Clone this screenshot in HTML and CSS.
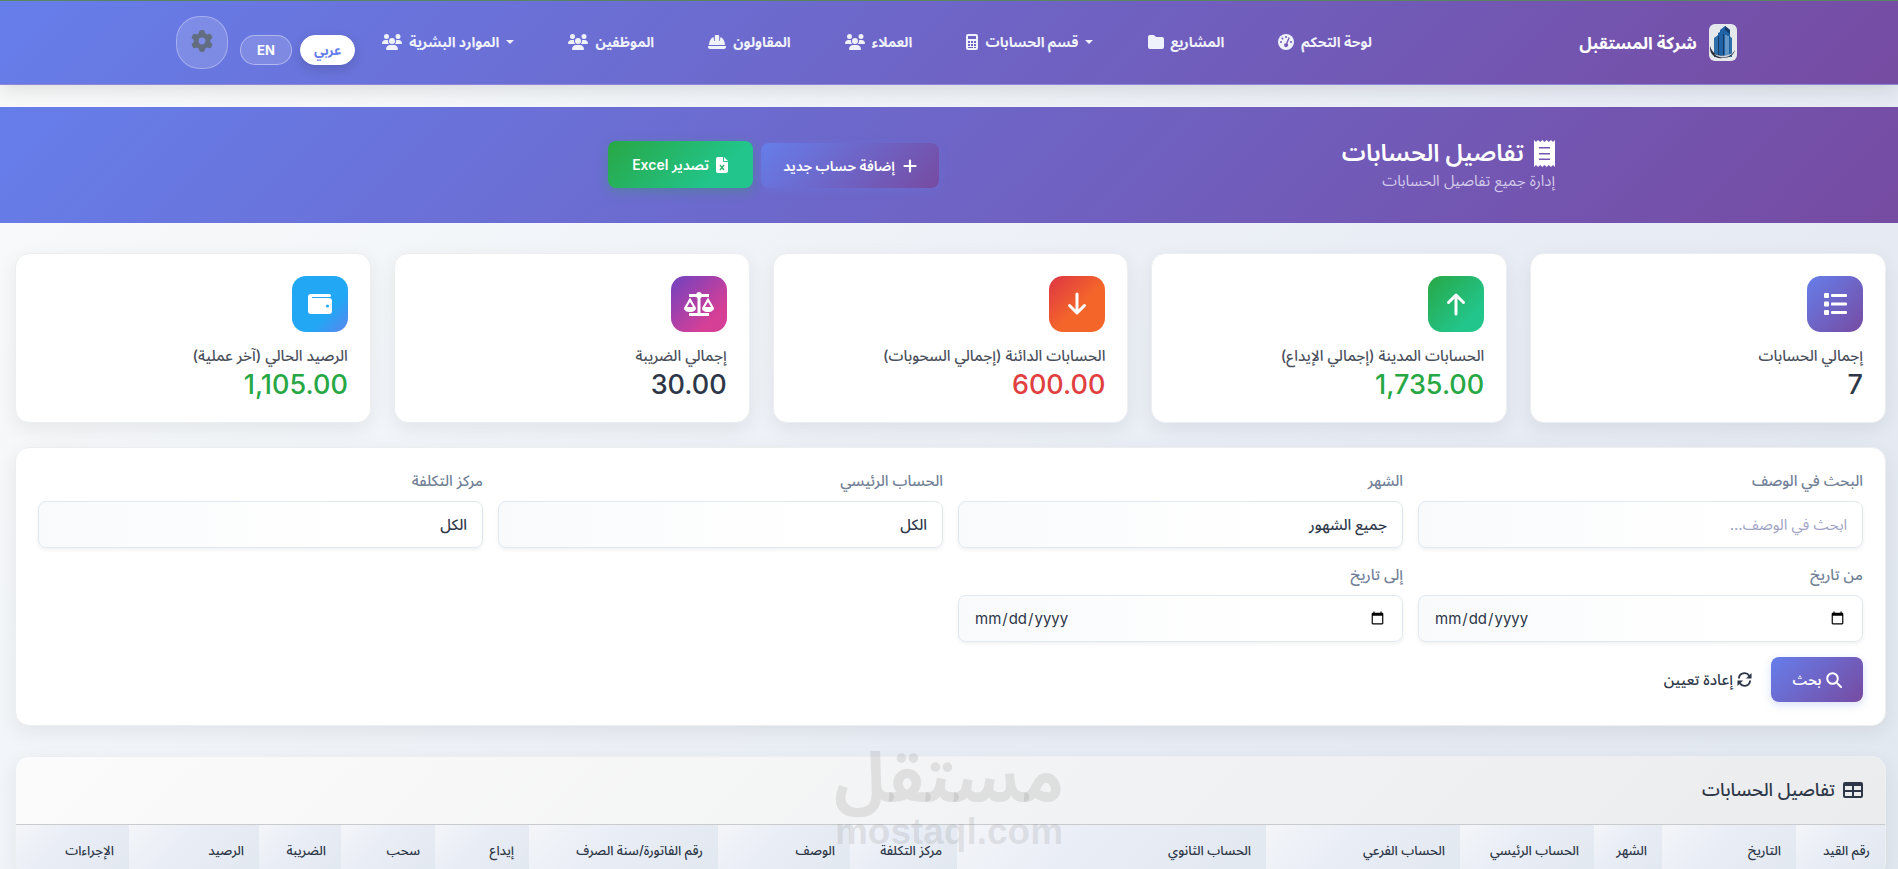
FILE: index.html
```html
<!DOCTYPE html>
<html lang="ar" dir="rtl">
<head>
<meta charset="utf-8">
<title>تفاصيل الحسابات</title>
<link rel="stylesheet" href="styles.css">
</head>
<body>
<svg class="sprite" aria-hidden="true">
  <symbol id="users" viewBox="0 0 640 512"><path d="M144 0a80 80 0 1 1 0 160A80 80 0 1 1 144 0zM512 0a80 80 0 1 1 0 160A80 80 0 1 1 512 0zM0 298.7C0 239.8 47.8 192 106.7 192h42.7c15.9 0 31 3.5 44.6 9.7c-1.3 7.2-1.9 14.7-1.9 22.3c0 38.2 16.8 72.5 43.3 96H21.3C9.6 320 0 310.4 0 298.7zM405.3 320c26.6-23.5 43.3-57.8 43.3-96c0-7.6-.7-15-1.9-22.3c13.6-6.3 28.7-9.7 44.6-9.7h42.7C592.2 192 640 239.8 640 298.7c0 11.8-9.6 21.3-21.3 21.3H405.3zM224 224a96 96 0 1 1 192 0 96 96 0 1 1-192 0zM128 485.3C128 411.7 187.7 352 261.3 352H378.7C452.3 352 512 411.7 512 485.3c0 14.7-11.9 26.7-26.7 26.7H154.7c-14.7 0-26.7-11.9-26.7-26.7z"/></symbol>
  <symbol id="gear" viewBox="0 0 512 512"><path d="M495.9 166.6c3.2 8.7 .5 18.4-6.4 24.6l-43.3 39.4c1.1 8.3 1.7 16.8 1.7 25.4s-.6 17.1-1.7 25.4l43.3 39.4c6.9 6.2 9.6 15.9 6.4 24.6c-4.4 11.9-9.7 23.3-15.8 34.3l-4.7 8.1c-6.6 11-14 21.4-22.1 31.2c-5.9 7.2-15.7 9.6-24.5 6.8l-55.7-17.7c-13.4 10.3-28.2 18.9-44 25.4l-12.5 57.1c-2 9.1-9 16.3-18.2 17.8c-13.8 2.3-28 3.5-42.5 3.5s-28.7-1.2-42.5-3.5c-9.2-1.5-16.2-8.7-18.2-17.8l-12.5-57.1c-15.8-6.5-30.6-15.1-44-25.4L83.1 425.9c-8.8 2.8-18.6 .3-24.5-6.8c-8.1-9.8-15.5-20.2-22.1-31.2l-4.7-8.1c-6.1-11-11.4-22.4-15.8-34.3c-3.2-8.7-.5-18.4 6.4-24.6l43.3-39.4C64.6 273.1 64 264.6 64 256s.6-17.1 1.7-25.4L22.4 191.2c-6.9-6.2-9.6-15.9-6.4-24.6c4.4-11.9 9.7-23.3 15.8-34.3l4.7-8.1c6.6-11 14-21.4 22.1-31.2c5.9-7.2 15.7-9.6 24.5-6.8l55.7 17.7c13.4-10.3 28.2-18.9 44-25.4l12.5-57.1c2-9.1 9-16.3 18.2-17.8C227.3 1.2 241.5 0 256 0s28.7 1.2 42.5 3.5c9.2 1.5 16.2 8.7 18.2 17.8l12.5 57.1c15.8 6.5 30.6 15.1 44 25.4l55.7-17.7c8.8-2.8 18.6-.3 24.5 6.8c8.1 9.8 15.5 20.2 22.1 31.2l4.7 8.1c6.1 11 11.4 22.4 15.8 34.3zM256 336a80 80 0 1 0 0-160 80 80 0 1 0 0 160z"/></symbol>
</svg>

<header class="topbar">
  <a class="brand" href="#">
    <svg class="brand-logo" viewBox="0 0 28 37" aria-hidden="true">
      <rect width="28" height="37" rx="6" fill="#e6e9ec"/>
      <path d="M5 14l4-3v22H5zM19 11l4 3v19h-4z" fill="#2f6fa8"/>
      <path d="M9 33V9l2-1V6l5-4 5 4v27z" fill="#1f62a5"/>
      <path d="M16 2l5 4v4l-5-4zM9 12h1v20H9zM14 10h1v22h-1z" fill="#173b66"/>
      <path d="M17 11v21M19 12v20" stroke="#a9cbe8" stroke-width="1"/>
      <path d="M1 22c-1 8 5 13 13 12 6 0 11-3 12-8-3 5-7 6-11 6-7 0-12-3-14-10z" fill="#272c3c"/>
      <path d="M5 30c5 5 14 5 20-2-5 4-13 5-20 2z" fill="#cfd4dc"/>
    </svg>
    <span>شركة المستقبل</span>
  </a>
  <nav class="nav" aria-label="القائمة الرئيسية">
    <a href="#">لوحة التحكم
      <svg class="nav-icon" viewBox="0 0 16 16"><circle cx="8" cy="8" r="8"/><g fill="#7257b5"><circle cx="8" cy="3" r="1"/><circle cx="4.400" cy="4.500" r="1"/><circle cx="3" cy="8" r="1"/><circle cx="13" cy="8" r="1"/><path d="M10.500 3.200l1.300.6-2.400 6a1.900 1.900 0 1 1-1.300-.5z"/></g></svg></a>
    <a href="#">المشاريع
      <svg class="nav-icon" viewBox="0 0 16 16"><path d="M2 1h4l2 2h6a2 2 0 0 1 2 2v8a2 2 0 0 1-2 2H2a2 2 0 0 1-2-2V3a2 2 0 0 1 2-2z"/></svg></a>
    <a href="#"><i class="caret"></i>قسم الحسابات
      <svg class="nav-icon nav-icon-slim" viewBox="0 0 12 16"><path fill-rule="evenodd" d="M2 0h8a2 2 0 0 1 2 2v12a2 2 0 0 1-2 2H2a2 2 0 0 1-2-2V2a2 2 0 0 1 2-2zM2 2v3h8V2zM2 7v2h2V7zM5 7v2h2V7zM8 7v2h2V7zM2 10v2h2v-2zM5 10v2h2v-2zM8 10v2h2v-2zM2 13v1h5v-1zM8 13v1h2v-1z"/></svg></a>
    <a href="#">العملاء
      <svg class="nav-icon nav-icon-wide"><use href="#users"/></svg></a>
    <a href="#">المقاولون
      <svg class="nav-icon nav-icon-hat" viewBox="0 0 18 16"><path d="M1 11c0-4 2-7 4.500-8l.7 4h.6V2c0-.6.400-1 1-1h2.400c.6 0 1 .4 1 1v5h.6l.7-4C15 4 17 7 17 11zM0 12h18v1c0 1-1 2-2 2H2c-1 0-2-1-2-2z"/></svg></a>
    <a href="#">الموظفين
      <svg class="nav-icon nav-icon-wide"><use href="#users"/></svg></a>
    <a href="#"><i class="caret"></i>الموارد البشرية
      <svg class="nav-icon nav-icon-wide"><use href="#users"/></svg></a>
  </nav>
  <div class="langs">
    <a class="lang lang-active" href="#">عربي</a>
    <a class="lang" href="#">EN</a>
  </div>
  <button class="settings" type="button" aria-label="الإعدادات"><svg><use href="#gear"/></svg></button>
</header>

<section class="hero">
  <div class="hero-inner">
    <div class="hero-text">
      <h1>
        <svg viewBox="0 0 21 27" aria-hidden="true"><path fill-rule="evenodd" d="M0 0l2 2 2-2 2.200 2L8.300 0l2.200 2 2.200-2 2.100 2L17 0l2 2 2-2v27l-2-2-2 2-2.200-2-2.100 2-2.200-2-2.200 2-2.100-2L4 27l-2-2-2 2zM5 7v1.500h11V7zM5 13v1.500h11V13zM5 18.500V20h11v-1.500z"/></svg>
        تفاصيل الحسابات
      </h1>
      <p>إدارة جميع تفاصيل الحسابات</p>
    </div>
    <div class="hero-actions">
      <a class="btn btn-primary" href="#">
        <svg viewBox="0 0 14 14" aria-hidden="true"><path d="M7 1.500v11M1.500 7h11" stroke="#fff" stroke-width="2.200" stroke-linecap="round"/></svg>
        إضافة حساب جديد</a>
      <button class="btn btn-excel" type="button">
        <svg viewBox="0 0 12 16" aria-hidden="true"><path d="M2 0h5v4a1 1 0 0 0 1 1h4v9a2 2 0 0 1-2 2H2a2 2 0 0 1-2-2V2a2 2 0 0 1 2-2zM8 0l4 4H8z"/><path d="M4 8l4 5M8 8l-4 5" stroke="#27b36a" stroke-width="1.300"/></svg>
        <span>تصدير <span dir="ltr">Excel</span></span></button>
    </div>
  </div>
</section>

<main class="content">
  <section class="stats">
    <article class="card stat">
      <div class="stat-icon icon-list"><svg viewBox="0 0 24 24"><g><rect x="1" y="1" width="5" height="5" rx="1"/><rect x="1" y="9.500" width="5" height="5" rx="1"/><rect x="1" y="18" width="5" height="5" rx="1"/><rect x="8" y="2" width="16" height="3" rx="1"/><rect x="8" y="10.500" width="16" height="3" rx="1"/><rect x="8" y="19" width="16" height="3" rx="1"/></g></svg></div>
      <div class="stat-label">إجمالي الحسابات</div>
      <div class="stat-value">7</div>
    </article>
    <article class="card stat">
      <div class="stat-icon icon-up"><svg viewBox="0 0 24 24"><path class="line" d="M12 22V3M4.500 10.500L12 3l7.500 7.500"/></svg></div>
      <div class="stat-label">الحسابات المدينة (إجمالي الإيداع)</div>
      <div class="stat-value green">1,735.00</div>
    </article>
    <article class="card stat">
      <div class="stat-icon icon-down"><svg viewBox="0 0 24 24"><path class="line" d="M12 2v19M4.500 13.500L12 21l7.500-7.500"/></svg></div>
      <div class="stat-label">الحسابات الدائنة (إجمالي السحوبات)</div>
      <div class="stat-value red">600.00</div>
    </article>
    <article class="card stat">
      <div class="stat-icon icon-tax"><svg class="wide" viewBox="0 0 30 24"><path fill-rule="evenodd" d="M5 2h7.200a3 3 0 0 1 5.600 0H25v3h-7.200l-1.300 1.200V21H25v3H5v-3h8.500V6.200L12.200 5H5zM6 5.500l6 10.500c0 2.500-2.700 4-6 4s-6-1.500-6-4zM6 10l-3 5h6zM24 5.500L30 16c0 2.500-2.700 4-6 4s-6-1.500-6-4zM24 10l-3 5h6z"/></svg></div>
      <div class="stat-label">إجمالي الضريبة</div>
      <div class="stat-value">30.00</div>
    </article>
    <article class="card stat">
      <div class="stat-icon icon-wallet"><svg viewBox="0 0 24 24"><path fill-rule="evenodd" d="M3 2h18.500a1.500 1.500 0 0 1 0 3H4v1h17a3 3 0 0 1 3 3v10a3 3 0 0 1-3 3H3a3 3 0 0 1-3-3V5a3 3 0 0 1 3-3zM19.500 12.500a1.500 1.500 0 1 0 0 3 1.500 1.500 0 0 0 0-3z"/></svg></div>
      <div class="stat-label">الرصيد الحالي (آخر عملية)</div>
      <div class="stat-value green">1,105.00</div>
    </article>
  </section>

  <form class="card filters">
    <div class="field"><label for="q">البحث في الوصف</label><input id="q" type="text" placeholder="ابحث في الوصف..."></div>
    <div class="field"><label for="month">الشهر</label><select id="month"><option>جميع الشهور</option></select></div>
    <div class="field"><label for="account">الحساب الرئيسي</label><select id="account"><option>الكل</option></select></div>
    <div class="field"><label for="center">مركز التكلفة</label><select id="center"><option>الكل</option></select></div>
    <div class="field"><label for="from">من تاريخ</label><input id="from" type="date" dir="ltr" lang="en"></div>
    <div class="field"><label for="to">إلى تاريخ</label><input id="to" type="date" dir="ltr" lang="en"></div>
    <div class="filter-actions">
      <button class="btn btn-search" type="submit"><svg viewBox="0 0 16 16" aria-hidden="true"><path d="M11 11l4 4" stroke="#fff" stroke-width="2" stroke-linecap="round"/><circle cx="6.500" cy="6.500" r="5.300" fill="none" stroke="#fff" stroke-width="2"/></svg>بحث</button>
      <button class="reset" type="reset"><svg viewBox="0 0 16 16" aria-hidden="true"><path d="M2 7a6 6 0 0 1 11-3l1.500 2M14 9a6 6 0 0 1-11 3L1.500 10" fill="none" stroke="#2d3748" stroke-width="2"/><path d="M15.500 1v6h-6zM.5 15V9h6z"/></svg>إعادة تعيين</button>
    </div>
  </form>

  <section class="card table-card">
    <h2><svg viewBox="0 0 20 18" aria-hidden="true"><path fill-rule="evenodd" d="M2 1h16a2 2 0 0 1 2 2v12a2 2 0 0 1-2 2H2a2 2 0 0 1-2-2V3a2 2 0 0 1 2-2zM2 5v4h7V5zM11 5v4h7V5zM2 11v4h7v-4zM11 11v4h7v-4z"/></svg>تفاصيل الحسابات</h2>
    <table>
      <colgroup><col class="c-no"><col class="c-date"><col class="c-month"><col class="c-main"><col class="c-sub"><col class="c-second"><col class="c-center"><col class="c-desc"><col class="c-invoice"><col class="c-in"><col class="c-out"><col class="c-tax"><col class="c-balance"><col></colgroup>
      <thead><tr><th>رقم القيد</th><th>التاريخ</th><th>الشهر</th><th>الحساب الرئيسي</th><th>الحساب الفرعي</th><th>الحساب الثانوي</th><th>مركز التكلفة</th><th>الوصف</th><th>رقم الفاتورة/سنة الصرف</th><th>إيداع</th><th>سحب</th><th>الضريبة</th><th>الرصيد</th><th>الإجراءات</th></tr></thead>
    </table>
  </section>
</main>

<div class="watermark" aria-hidden="true"><span class="wm-ar">مستقل</span><span class="wm-en" dir="ltr">mostaql.com</span></div>
</body>
</html>
```
FILE: styles.css
```css
* { box-sizing: border-box; }
html, body { height: 100%; }
body {
  margin: 0;
  overflow: hidden;
  position: relative;
  font-family: Inter, "Noto Sans Arabic", "Noto Sans", "DejaVu Sans", sans-serif;
  font-size: 15px;
  line-height: 24px;
  color: #2d3748;
  background: linear-gradient(135deg, #fafafa 0%, #f3f6f9 25%, #e9edf5 60%, #e2e8f0 100%);
}
a { text-decoration: none; color: inherit; }
button, input, select { font: inherit; color: inherit; }
svg { fill: currentColor; flex: none; }
.sprite { position: absolute; width: 0; height: 0; }

.topbar {
  display: flex;
  align-items: center;
  height: 85px;
  padding-inline: 161px 176px;
  color: #fff;
  background: linear-gradient(135deg, #667eea, #764ba2);
  border-top: 1px solid #588560;
  border-bottom: 1px solid #8f85d6;
  box-shadow: 0 4px 20px rgba(0, 0, 0, .12);
}
.brand { display: flex; align-items: center; gap: 12px; flex: 0 0 365px; font-size: 17px; font-weight: 700; white-space: nowrap; }
.brand-logo { width: 28px; height: 37px; }
.nav { flex: 1; display: flex; justify-content: space-between; padding-bottom: 2px; font-size: 14px; font-weight: 700; color: #f0f2fb; }
.nav a { display: flex; align-items: center; gap: 7px; white-space: nowrap; }
.nav-icon { width: 16px; height: 16px; }
.nav-icon-slim { width: 12px; }
.nav-icon-wide { width: 20px; }
.nav-icon-hat { width: 18px; }
.caret { border: 4px solid transparent; border-top-color: currentColor; border-bottom: 0; }
.langs { display: flex; gap: 8px; margin: 14px 27px 0 12px; }
.lang {
  padding: 2px 13px;
  min-width: 52px;
  text-align: center;
  border: 1px solid rgba(255, 255, 255, .4);
  border-radius: 15px;
  background: rgba(255, 255, 255, .15);
  font-size: 13px;
  font-weight: 700;
}
.lang-active { min-width: 55px; background: #fff; color: #667eea; border-color: #fff; box-shadow: 0 4px 12px rgba(0, 0, 0, .15); }
.settings {
  display: grid;
  place-items: center;
  width: 52px;
  height: 53px;
  padding: 0 0 4px;
  border: 1px solid rgba(255, 255, 255, .3);
  border-radius: 24px;
  background: rgba(255, 255, 255, .15);
  color: #626d80;
}
.settings svg { width: 22px; height: 22px; }

.hero { margin-top: 22px; padding: 28px 0 33px; background: linear-gradient(135deg, #667eea, #764ba2); color: #fff; }
.hero-inner { display: grid; grid-template-columns: 616px 1fr; align-items: center; max-width: 1212px; margin: 0 auto; }
h1 { display: flex; align-items: center; gap: 10px; margin: 0; font-size: 24px; line-height: 36px; font-weight: 600; }
h1 svg { width: 21px; height: 27px; }
.hero-text p { margin: 0; line-height: 19px; color: #d4caea; }
.hero-actions { display: flex; align-items: flex-end; gap: 8px; margin-top: 4px; }
.btn {
  display: inline-flex;
  align-items: center;
  justify-content: center;
  gap: 8px;
  height: 45px;
  padding: 0 20px;
  border: 0;
  border-radius: 8px;
  color: #fff;
  font-size: 14px;
  font-weight: 600;
  white-space: nowrap;
  background: linear-gradient(135deg, #667eea, #764ba2);
}
.btn svg { width: 14px; height: 16px; }
.btn-primary { min-width: 178px; box-shadow: 0 2px 10px rgba(102, 126, 234, .3); }
.btn-excel { height: 47px; min-width: 145px; gap: 6px; background: linear-gradient(135deg, #28a745, #22c58b 75%); box-shadow: 0 4px 12px rgba(40, 167, 69, .3); }

.content { padding: 30px 12px 0 15px; }
.card { background: #fff; border: 1px solid #eceef0; border-radius: 14px; box-shadow: 0 6px 20px rgba(0, 0, 0, .07); }
.stats { display: grid; grid-template-columns: repeat(5, 1fr); gap: 23px; }
.stat { padding: 22px 22px 20px; }
.stat-icon { display: grid; place-items: center; width: 56px; height: 56px; border-radius: 14px; color: #fff; }
.stat-icon svg { width: 24px; height: 24px; }
.stat-icon svg.wide { width: 30px; }
.line { fill: none; stroke: #fff; stroke-width: 3; stroke-linecap: round; stroke-linejoin: round; }
.icon-list { background: linear-gradient(135deg, #667eea, #764ba2); }
.icon-up { background: linear-gradient(135deg, #28a745, #22c58b 75%); }
.icon-down { background: linear-gradient(135deg, #dc3545, #f4652a 55%); }
.icon-tax { background: linear-gradient(135deg, #6f42c1, #d63f96 75%); }
.icon-wallet { background: linear-gradient(135deg, #22a7f5 65%, #5b85ee); }
.stat-label { margin-top: 12px; color: #4a4f5c; font-weight: 500; }
.stat-value { font-size: 27px; line-height: 34px; font-weight: 500; }
.green { color: #28a745; }
.red { color: #e0403f; }

.filters { display: grid; grid-template-columns: repeat(4, 1fr); gap: 15px; margin-top: 24px; padding: 21px 22px 23px; }
.field label { display: block; margin-bottom: 8px; color: #718096; font-weight: 500; }
.field input, .field select {
  display: block;
  appearance: none;
  width: 100%;
  height: 47px;
  padding: 0 15px;
  border: 1px solid #e2e8f0;
  border-radius: 8px;
  outline: 0;
  background: linear-gradient(90deg, #f9fafc, #fff 70%);
  box-shadow: 0 2px 4px rgba(0, 0, 0, .06);
}
.field input::placeholder { color: #a0a3c4; }
.field select { font-weight: 500; }
.filter-actions { grid-column: 1 / -1; display: flex; align-items: center; gap: 19px; }
.btn-search { gap: 4px; min-width: 92px; box-shadow: 0 3px 8px rgba(102, 126, 234, .25); }
.btn-search svg { width: 16px; }
.reset { display: flex; align-items: center; gap: 4px; padding: 0; border: 0; background: none; font-weight: 500; }
.reset svg { width: 15px; height: 15px; }

.table-card { margin-top: 30px; overflow: hidden; }
h2 { display: flex; align-items: center; gap: 8px; margin: 0; padding: 19px 22px 20px; font-size: 18px; line-height: 28px; font-weight: 500; background: linear-gradient(135deg, #fbfbfb, #ebecee); border-bottom: 1px solid #c9cbce; }
h2 svg { width: 20px; height: 18px; }
table { width: 100%; table-layout: fixed; border-collapse: collapse; }
th { height: 50px; padding: 0 15px; text-align: start; font-size: 13px; font-weight: 500; white-space: nowrap; background: linear-gradient(135deg, #f3f5f8, #e9edf6 40%, #e2e8f0); }
.c-no { width: 89px; }
.c-date, .c-main { width: 134px; }
.c-month { width: 68px; }
.c-sub { width: 194px; }
.c-second { width: 309px; }
.c-center { width: 107px; }
.c-desc { width: 132px; }
.c-invoice { width: 189px; }
.c-in, .c-out { width: 94px; }
.c-tax { width: 82px; }
.c-balance { width: 130px; }

.watermark {
  position: absolute;
  inset: 742px 0 auto;
  display: flex;
  flex-direction: column;
  align-items: center;
  color: rgba(120, 120, 120, .16);
  font-weight: 700;
  pointer-events: none;
}
.wm-ar { font-size: 69px; line-height: 70px; }
.wm-en { font-family: "Liberation Sans", sans-serif; font-size: 37px; line-height: 40px; }
```
